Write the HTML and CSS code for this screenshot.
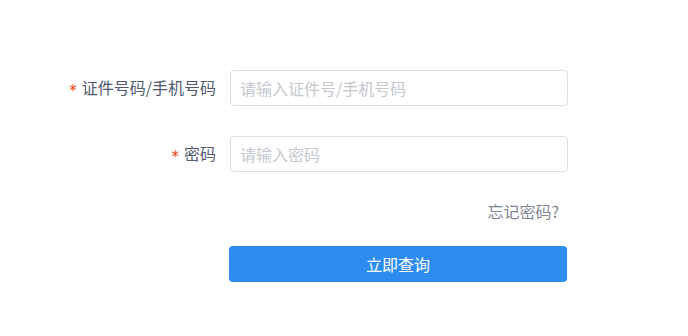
FILE: index.html
```html
<!DOCTYPE html>
<html lang="zh-CN">
<head>
<meta charset="utf-8">
<link rel="stylesheet" href="styles.css">
</head>
<body>
<form class="form">
  <div class="row">
    <label class="label"><span class="req">*</span>证件号码/手机号码</label>
    <input class="input" type="text" placeholder="请输入证件号/手机号码">
  </div>
  <div class="row">
    <label class="label"><span class="req">*</span>密码</label>
    <input class="input" type="password" placeholder="请输入密码">
  </div>
  <div class="row forgot-row">
    <span></span>
    <a class="forgot">忘记密码?</a>
  </div>
  <div class="row btn-row">
    <span></span>
    <button class="btn" type="button">立即查询</button>
  </div>
</form>
</body>
</html>
```

FILE: styles.css
```css
html, body {
  margin: 0;
  padding: 0;
  background: #fff;
  font-family: "Noto Sans CJK SC", "Noto Sans", sans-serif;
}
.form {
  padding-top: 70px;
  display: flex;
  flex-direction: column;
}
.row {
  display: grid;
  grid-template-columns: 216px 338px;
  grid-template-rows: 36px;
  column-gap: 14px;
  align-items: center;
  margin-bottom: 30px;
}
.label {
  text-align: right;
  font-size: 16px;
  color: #515a6e;
  line-height: 35px;
  height: 36px;
  white-space: nowrap;
}
.req {
  color: #ed4014;
  font-size: 15px;
  margin-right: 5px;
  font-family: "DejaVu Sans", sans-serif;
  vertical-align: -2px;
}
.input {
  box-sizing: border-box;
  height: 36px;
  width: 338px;
  border: 1px solid #dcdee2;
  border-radius: 4px;
  padding: 0 9px 1px;
  font-size: 16px;
  font-family: inherit;
  color: #515a6e;
  outline: none;
}
.input::placeholder {
  color: #c5c8ce;
}
.forgot-row {
  grid-template-rows: 20px;
  margin-bottom: 24px;
}
.forgot {
  justify-self: end;
  margin-right: 9px;
  margin-top: -2px;
  font-size: 16px;
  line-height: 20px;
  color: #808695;
  cursor: pointer;
}
.btn-row {
  margin-bottom: 0;
}
.btn {
  margin-left: -1px;
  box-sizing: border-box;
  height: 36px;
  width: 338px;
  border: none;
  border-radius: 4px;
  background: #2d8cf0;
  color: #fff;
  font-size: 16px;
  font-family: inherit;
}
```
